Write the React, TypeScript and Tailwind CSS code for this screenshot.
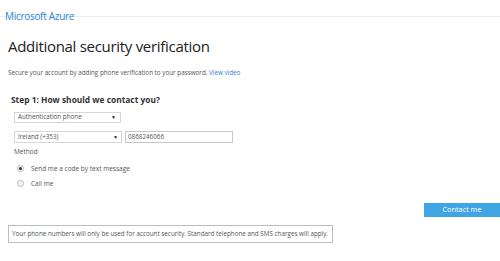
export default function App() {
  return (
    <div
      className="w-[500px] h-[261px] bg-white overflow-hidden text-[#333]"
      style={{ fontFamily: '"Open Sans", "Noto Sans", sans-serif' }}
    >
      <div className="h-[17px] border-b border-[#ececec] pl-[5px] pt-[2px]">
        <span className="text-[10px] leading-[13px] text-[#1f86d6] tracking-[-0.3px]">Microsoft Azure</span>
      </div>

      <div className="pl-[8px]">
        <h1 className="mt-[19px] text-[15px] leading-[20px] font-normal text-[#222] tracking-[-0.3px]">
          Additional security verification
        </h1>
        <p className="mt-[12px] text-[6.3px] leading-[9px] text-[#555]">
          Secure your account by adding phone verification to your password.{' '}
          <span className="text-[#2a7fcf]">View video</span>
        </p>

        <h2 className="mt-[17px] pl-[3px] text-[8.4px] leading-[12px] font-bold text-[#333]">
          Step 1: How should we contact you?
        </h2>

        <div className="pl-[6px] flex flex-col">
          <div className="mt-[6px] w-[107px] h-[11px] border border-[#d6d6d6] flex items-center justify-between px-[3px]">
            <span className="text-[6.3px] leading-none text-[#555]">Authentication phone</span>
            <span className="text-[5px] leading-none text-[#222] mr-[1px]">▼</span>
          </div>

          <div className="mt-[8px] flex items-center gap-[3px]">
            <div className="w-[108px] h-[12px] border border-[#d6d6d6] flex items-center justify-between px-[3px]">
              <span className="text-[6.3px] leading-none text-[#555]">Ireland (+353)</span>
              <span className="text-[5px] leading-none text-[#222]">▼</span>
            </div>
            <div className="w-[108px] h-[12px] border border-[#c8c8c8] flex items-center px-[2px]">
              <span className="text-[6.3px] leading-none text-[#555]">0868246066</span>
            </div>
          </div>

          <div className="mt-[4px] text-[6.5px] leading-[9px] text-[#555]">Method</div>

          <div className="mt-[8px] pl-[3px] flex flex-col gap-[6px]">
            <div className="flex items-center gap-[7px]">
              <span className="w-[7px] h-[7px] rounded-full border border-[#bbb] bg-[#f4f4f4] flex items-center justify-center">
                <span className="w-[3px] h-[3px] rounded-full bg-[#333]" />
              </span>
              <span className="text-[6.5px] leading-[9px] text-[#555]">Send me a code by text message</span>
            </div>
            <div className="flex items-center gap-[7px]">
              <span className="w-[7px] h-[7px] rounded-full border border-[#bbb] bg-[#f4f4f4]" />
              <span className="text-[6.5px] leading-[9px] text-[#555]">Call me</span>
            </div>
          </div>
        </div>

        <div className="mt-[15px] flex justify-end">
          <button className="w-[76px] h-[14px] bg-[#40a6e3] text-white text-[7.3px] leading-none">
            Contact me
          </button>
        </div>

        <div className="mt-[8px] w-[325px] h-[18px] border border-[#bdbdbd] flex items-center px-[3px]">
          <span className="text-[6.3px] leading-none text-[#555] whitespace-nowrap">
            Your phone numbers will only be used for account security. Standard telephone and SMS charges will apply.
          </span>
        </div>
      </div>
    </div>
  );
}
